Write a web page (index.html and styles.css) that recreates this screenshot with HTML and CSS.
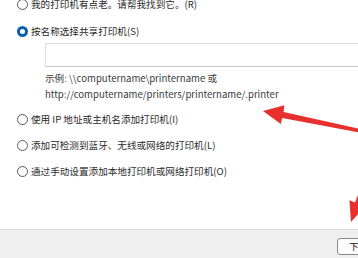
FILE: index.html
```html
<!DOCTYPE html>
<html lang="zh-CN">
<head>
<meta charset="utf-8">
<link rel="stylesheet" href="styles.css">
</head>
<body>
<div class="page">
  <div class="content">
    <div class="opt first"><span class="radio"></span><span class="label">我的打印机有点老。请帮我找到它。(R)</span></div>
    <div class="opt second"><span class="radio checked"></span><span class="label">按名称选择共享打印机(S)</span></div>
    <div class="input"></div>
    <div class="example">
      <div class="ex-line">示例: \\computername\printername 或</div>
      <div class="ex-line">http://computername/printers/printername/.printer</div>
    </div>
    <div class="opt third"><span class="radio"></span><span class="label">使用 IP 地址或主机名添加打印机(I)</span></div>
    <div class="opt"><span class="radio"></span><span class="label">添加可检测到蓝牙、无线或网络的打印机(L)</span></div>
    <div class="opt"><span class="radio"></span><span class="label">通过手动设置添加本地打印机或网络打印机(O)</span></div>
  </div>
  <div class="footer">
    <button class="btn">下一步(N)</button>
  </div>
  <svg class="arrows" width="358" height="258" viewBox="0 0 358 258">
    <polygon fill="#e8312f" points="263,111 284.4,105.2 283.6,112 360.5,129 359.8,132.6 282.2,118 280.8,124"/>
    <polygon fill="#e8312f" points="351,222 349.4,200.3 355,202.4 378,146 381,147 360.2,204.3 365.5,206"/>
  </svg>
</div>
</body>
</html>
```

FILE: styles.css
```css
html, body {
  margin: 0;
  padding: 0;
  background: #ffffff;
}

.page {
  position: relative;
  width: 358px;
  height: 258px;
  overflow: hidden;
  display: flex;
  flex-direction: column;
  font-family: "Noto Sans CJK SC", "Noto Sans", sans-serif;
  font-size: 9.6px;
  color: #2a2a2a;
}

.content {
  flex: 1;
  display: flex;
  flex-direction: column;
  padding-left: 17px;
}

.opt {
  display: flex;
  align-items: center;
  gap: 3px;
  height: 16px;
  margin-top: 10px;
  white-space: nowrap;
}

.opt.first {
  margin-top: -4px;
}

.opt.second {
  margin-top: 11px;
}

.opt.third {
  margin-top: 9px;
}

.radio {
  box-sizing: border-box;
  width: 11px;
  height: 11px;
  border: 1px solid #5a5a5a;
  border-radius: 50%;
  background: #fff;
  flex: none;
}

.radio.checked {
  border: 3px solid #0a5fb4;
}

.label {
  line-height: 16px;
}

.input {
  box-sizing: border-box;
  margin-left: 28px;
  margin-right: -10px;
  margin-top: 4px;
  height: 24px;
  border: 1px solid #dedede;
  border-bottom-color: #c8c8c8;
  background: #fff;
}

.example {
  margin-left: 28px;
  margin-top: 3px;
  color: #3a3a3a;
}

.ex-line {
  height: 16px;
  line-height: 16px;
  white-space: nowrap;
}

.footer {
  flex: none;
  background: #efefef;
  border-top: 1px solid #dcdcdc;
  display: flex;
  align-items: flex-start;
  padding-left: 337px;
  padding-top: 8px;
  box-sizing: border-box;
  height: 29px;
}

.btn {
  box-sizing: border-box;
  height: 17px;
  min-width: 70px;
  flex: none;
  padding: 0 0 0 11px;
  border: 1px solid #8a8a8a;
  border-radius: 3px;
  background: #fbfbfb;
  font-family: "Noto Sans CJK SC", "Noto Sans", sans-serif;
  font-size: 9.6px;
  color: #222;
  text-align: left;
  line-height: 15px;
}

.arrows {
  position: absolute;
  left: 0;
  top: 0;
  pointer-events: none;
}
```
